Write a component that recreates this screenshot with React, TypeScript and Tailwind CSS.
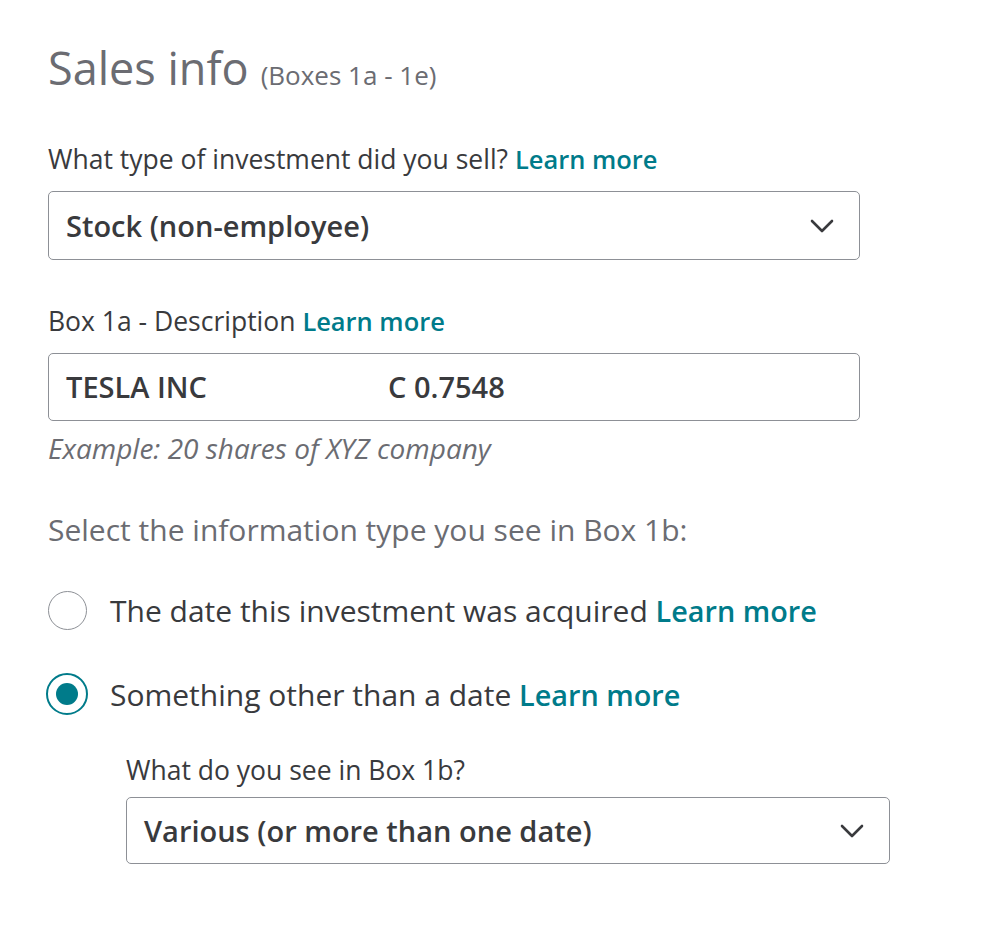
import { ReactNode } from "react"

const font = { fontFamily: "'Open Sans', 'Noto Sans', sans-serif" }

function LearnMore() {
  return <a className="font-semibold text-[0.96em] text-[#007b8a] cursor-pointer">Learn more</a>
}

function Chevron() {
  return (
    <svg width="24" height="14" viewBox="0 0 24 14" fill="none" className="shrink-0">
      <path d="M2 2l10 10L22 2" stroke="#393a3d" strokeWidth="2.6" strokeLinecap="round" strokeLinejoin="round" />
    </svg>
  )
}

function SelectBox({ value, className }: { value: string; className: string }) {
  return (
    <div
      className={`flex items-center justify-between border-[1.5px] border-[#8d9096] rounded-[5px] pl-[17px] pr-[25px] ${className}`}
    >
      <span className="text-[29px] font-semibold text-[#393a3d]">{value}</span>
      <Chevron />
    </div>
  )
}

function Radio({ checked, children }: { checked?: boolean; children: ReactNode }) {
  return (
    <div className="flex items-center h-[44px]">
      {checked ? (
        <span className="w-[42px] h-[42px] rounded-full border-[2.5px] border-[#007b8a] flex items-center justify-center -ml-[2px] mr-[22px]">
          <span className="w-[22px] h-[22px] rounded-full bg-[#007b8a]" />
        </span>
      ) : (
        <span className="w-[39px] h-[39px] rounded-full border-[1.5px] border-[#8d9096] mr-[23px]" />
      )}
      <span className="text-[30px] text-[#393a3d]">{children}</span>
    </div>
  )
}

export default function App() {
  return (
    <div className="w-[999px] h-[930px] bg-white pl-[48px] pt-[40px]" style={font}>
      <h1 className="flex items-baseline h-[56px] text-[#6b6c72]">
        <span className="text-[45px] leading-[56px]">Sales info</span>
        <span className="text-[26px] leading-[56px] ml-[12px]">(Boxes 1a - 1e)</span>
      </h1>

      <p className="mt-[48px] text-[26.5px] leading-[30px] text-[#393a3d]">
        What type of investment did you sell? <LearnMore />
      </p>
      <SelectBox value="Stock (non-employee)" className="mt-[17px] w-[812px] h-[69px]" />

      <p className="mt-[46px] text-[26.5px] leading-[30px] text-[#393a3d]">
        Box 1a - Description <LearnMore />
      </p>
      <div className="mt-[17px] w-[812px] h-[68px] border-[1.5px] border-[#8d9096] rounded-[5px] pl-[17px] flex items-center text-[29px] font-semibold text-[#393a3d]">
        <span className="w-[322px]">TESLA INC</span>
        <span>C 0.7548</span>
      </div>
      <p className="mt-[12px] text-[28px] leading-[30px] italic text-[#6b6c72]">
        Example: 20 shares of XYZ company
      </p>

      <p className="mt-[49px] text-[30px] leading-[36px] text-[#6b6c72]">
        Select the information type you see in Box 1b:
      </p>

      <div className="mt-[40px]">
        <Radio>
          The date this investment was acquired <LearnMore />
        </Radio>
      </div>
      <div className="mt-[40px]">
        <Radio checked>
          Something other than a date <LearnMore />
        </Radio>
      </div>

      <div className="ml-[78px]">
        <p className="mt-[39px] text-[26.5px] leading-[30px] text-[#393a3d]">What do you see in Box 1b?</p>
        <SelectBox value="Various (or more than one date)" className="mt-[12px] w-[764px] h-[67px]" />
      </div>
    </div>
  )
}
